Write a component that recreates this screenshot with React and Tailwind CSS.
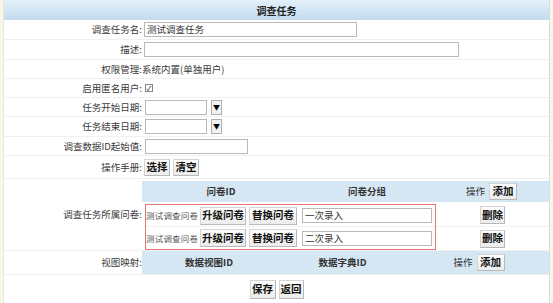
const font = { fontFamily: '"Noto Sans CJK SC", "Liberation Sans", sans-serif' };

const Btn = ({ children, className = '' }) => (
  <button
    className={`flex items-center justify-center whitespace-nowrap border border-[#d4d4d4] border-r-[#b8b8b8] border-b-[#b8b8b8] bg-gradient-to-b from-[#fcfcfc] to-[#ececec] text-[10.5px] font-bold text-[#111] leading-none ${className}`}
  >
    {children}
  </button>
);

const Row = ({ label, h, children }) => (
  <div className="flex items-center border-b border-[#f0f0f0]" style={{ height: h }}>
    <div className="w-[138px] shrink-0 whitespace-nowrap text-right text-[9.5px] text-[#3a3a3a]">{label}</div>
    <div className="flex flex-1 items-center">{children}</div>
  </div>
);

const Input = ({ className = '', value = '' }) => (
  <div className={`flex h-[15px] items-center whitespace-nowrap border border-[#b9b9b9] bg-white px-[2px] text-[9.5px] text-[#333] ${className}`}>
    {value}
  </div>
);

const Drop = () => (
  <div className="ml-[4px] flex h-[15px] w-[11px] items-center justify-center border border-[#b0b0b0] bg-[#f2f2f2] text-[7px] leading-none text-black">
    ▼
  </div>
);

export default function App() {
  return (
    <div className="h-[303px] w-[553px] overflow-hidden bg-[#f8f6e8] pl-[3px]" style={font}>
      <div className="h-full w-[547px] border-l border-r border-l-[#ebe7d2] border-r-[#dcdcdc] bg-white">
        {/* Header */}
        <div className="flex h-[20px] items-center justify-center bg-gradient-to-b from-[#e4f0fa] to-[#c2dbef] text-[10px] font-bold text-[#222]">
          调查任务
        </div>

        <Row label="调查任务名:" h={20}>
          <Input className="ml-[2px] w-[213px]" value="测试调查任务" />
        </Row>
        <Row label="描述:" h={20}>
          <Input className="ml-[2px] w-[315px]" />
        </Row>
        <Row label="权限管理:" h={19}>
          <span className="text-[9.5px] text-[#3a3a3a]">系统内置(单独用户)</span>
        </Row>
        <Row label="启用匿名用户:" h={19}>
          <div className="ml-[3px] flex h-[8px] w-[8px] items-center justify-center border border-[#888] bg-white text-[7px] leading-none text-[#222]">
            ✓
          </div>
        </Row>
        <Row label="任务开始日期:" h={19}>
          <Input className="ml-[3px] w-[62px]" />
          <Drop />
        </Row>
        <Row label="任务结束日期:" h={20}>
          <Input className="ml-[3px] w-[62px]" />
          <Drop />
        </Row>
        <Row label="调查数据ID起始值:" h={19}>
          <Input className="ml-[3px] w-[103px]" />
        </Row>
        <Row label="操作手册:" h={23}>
          <div className="ml-[2px] flex gap-[3px]">
            <Btn className="h-[17px] w-[26px]">选择</Btn>
            <Btn className="h-[17px] w-[26px]">清空</Btn>
          </div>
        </Row>

        {/* 问卷 */}
        <div className="flex h-[72px] items-center border-b border-[#f0f0f0]">
          <div className="w-[138px] shrink-0 whitespace-nowrap text-right text-[9.5px] text-[#3a3a3a]">调查任务所属问卷:</div>
          <div className="flex h-full flex-1 flex-col pt-[2px]">
            <div className="flex h-[21px] items-center bg-[#d6e7f4] text-[9.5px] font-bold text-[#333]">
              <div className="w-[158px] text-center">问卷ID</div>
              <div className="w-[134px] text-center">问卷分组</div>
              <div className="flex flex-1 items-center justify-center gap-[4px]">
                <span className="font-normal">操作</span>
                <Btn className="h-[17px] w-[28px]">添加</Btn>
              </div>
            </div>
            <div className="mt-[2px] flex">
              <div className="ml-[3px] w-[291px] border border-[#e07a7a]">
                {['一次录入', '二次录入'].map((g, i) => (
                  <div key={g} className={`flex h-[22px] items-center ${i === 0 ? 'border-b border-[#f0f0f0]' : ''}`}>
                    <span className="w-[54px] shrink-0 overflow-hidden whitespace-nowrap text-[8.5px] tracking-[0.2px] text-[#555]">测试调查问卷</span>
                    <Btn className="h-[18px] w-[46px]">升级问卷</Btn>
                    <Btn className="ml-[3px] h-[18px] w-[48px]">替换问卷</Btn>
                    <Input className="ml-[5px] w-[130px]" value={g} />
                  </div>
                ))}
              </div>
              <div className="flex flex-1 flex-col">
                <div className="flex h-[23px] items-center justify-center border-b border-[#f0f0f0]">
                  <Btn className="h-[18px] w-[25px]">删除</Btn>
                </div>
                <div className="flex h-[23px] items-center justify-center">
                  <Btn className="h-[18px] w-[25px]">删除</Btn>
                </div>
              </div>
            </div>
          </div>
        </div>

        {/* 视图映射 */}
        <div className="flex h-[24px] items-center border-b border-[#f0f0f0]">
          <div className="w-[138px] shrink-0 text-right text-[9.5px] text-[#3a3a3a]">视图映射:</div>
          <div className="flex h-[23px] flex-1 items-center bg-[#d6e7f4] text-[9.5px] font-bold text-[#333]">
            <div className="w-[134px] text-center">数据视图ID</div>
            <div className="w-[133px] text-center">数据字典ID</div>
            <div className="flex flex-1 items-center justify-center gap-[4px]">
              <span className="font-normal">操作</span>
              <Btn className="h-[17px] w-[28px]">添加</Btn>
            </div>
          </div>
        </div>

        {/* Actions */}
        <div className="flex h-[28px] items-center justify-center gap-[3px]">
          <Btn className="h-[19px] w-[26px]">保存</Btn>
          <Btn className="h-[19px] w-[25px]">返回</Btn>
        </div>
      </div>
    </div>
  );
}
